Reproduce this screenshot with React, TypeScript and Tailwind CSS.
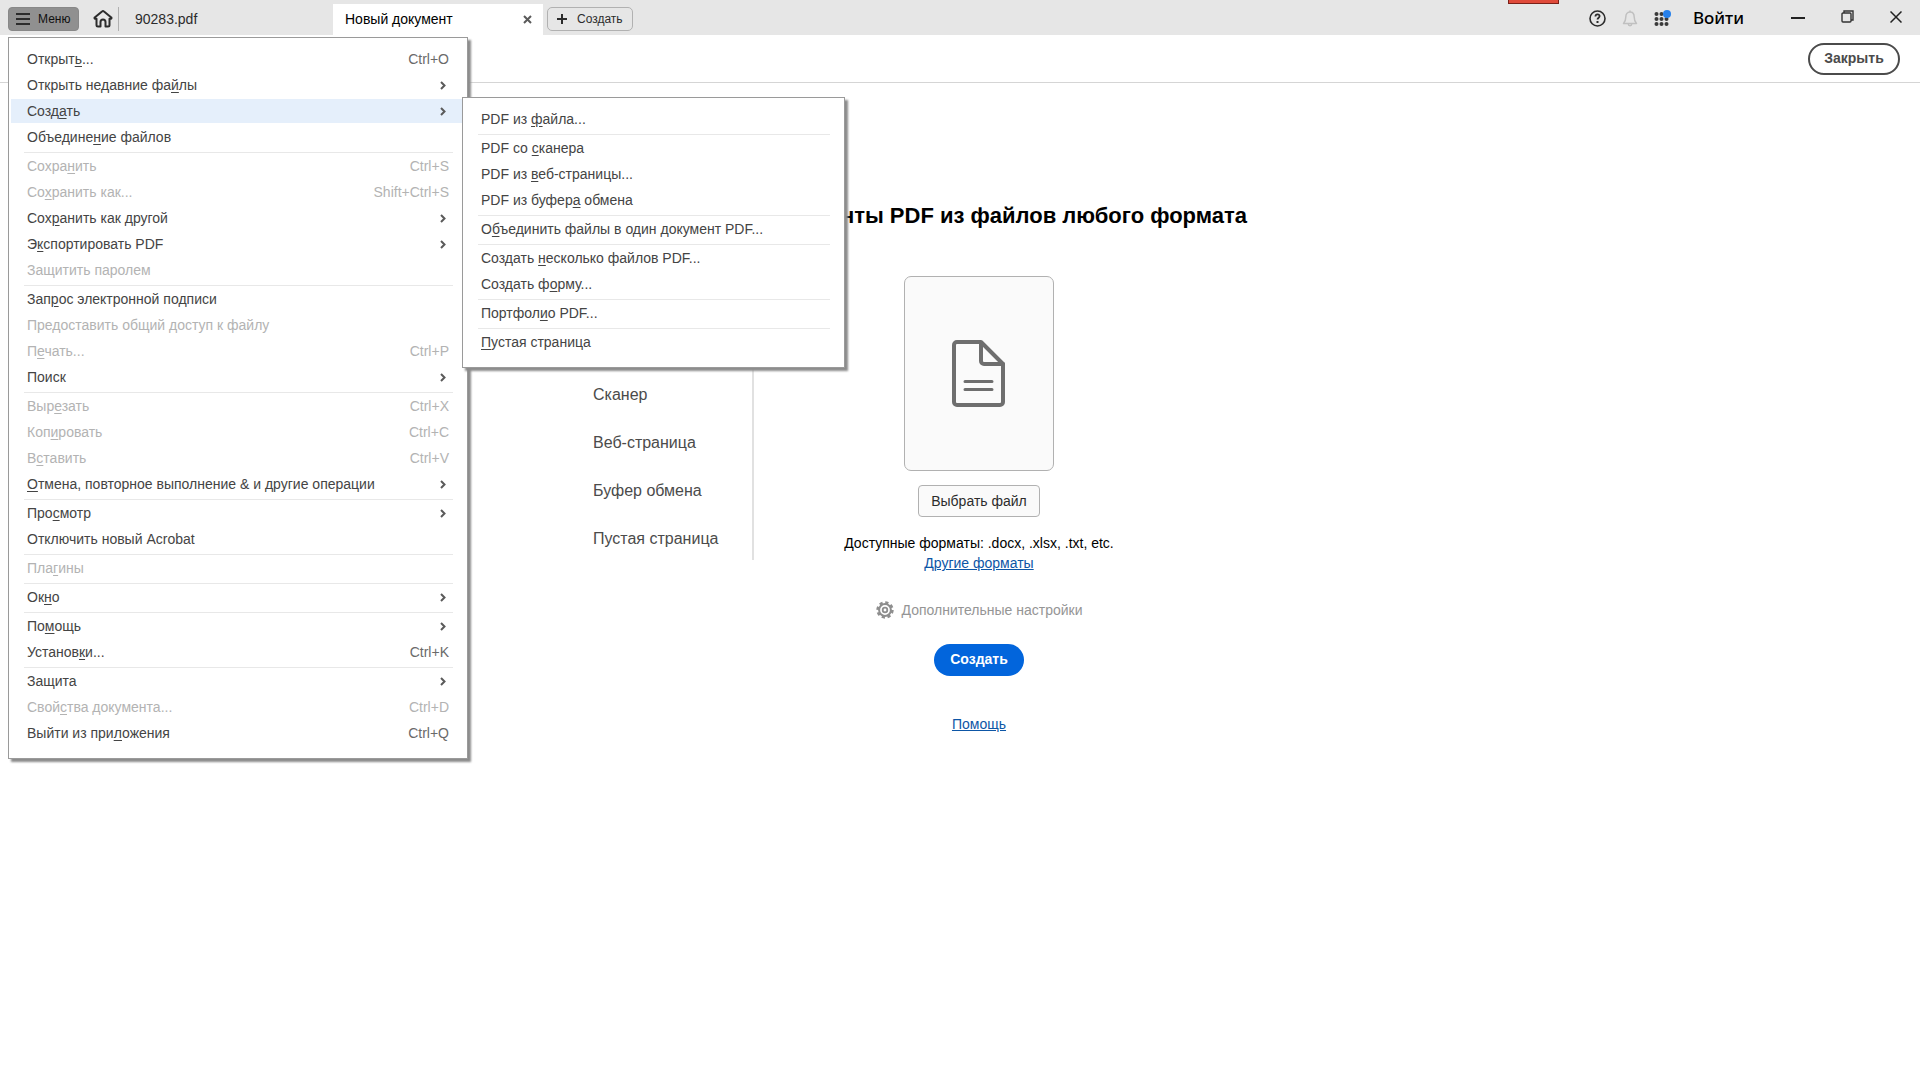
import { Fragment } from 'react'
import type { ReactNode } from 'react'

interface MenuEntry {
    label: string
    shortcut?: string
    submenu?: boolean
    disabled?: boolean
    active?: boolean
}

// "_" goes before the letter that serves as the access key
const mainMenu: MenuEntry[][] = [
    [
        { label: 'Открыт_ь...', shortcut: 'Ctrl+O' },
        { label: 'Открыть недавние фа_йлы', submenu: true },
        { label: 'Созд_ать', submenu: true, active: true },
        { label: 'Объедине_ние файлов' },
    ],
    [
        { label: 'Сохра_нить', shortcut: 'Ctrl+S', disabled: true },
        { label: 'Со_хранить как...', shortcut: 'Shift+Ctrl+S', disabled: true },
        { label: 'Сох_ранить как другой', submenu: true },
        { label: 'Э_кспортировать PDF', submenu: true },
        { label: 'Защитить паролем', disabled: true },
    ],
    [
        { label: 'Зап_рос электронной подписи' },
        { label: 'Предоставить общий доступ к файлу', disabled: true },
        { label: 'П_ечать...', shortcut: 'Ctrl+P', disabled: true },
        { label: 'Поиск', submenu: true },
    ],
    [
        { label: 'Выр_езать', shortcut: 'Ctrl+X', disabled: true },
        { label: 'Коп_ировать', shortcut: 'Ctrl+C', disabled: true },
        { label: 'В_ставить', shortcut: 'Ctrl+V', disabled: true },
        { label: '_Отмена, повторное выполнение & и другие операции', submenu: true },
    ],
    [
        { label: 'Про_смотр', submenu: true },
        { label: 'Отключить новый Acrobat' },
    ],
    [{ label: 'Пла_гины', disabled: true }],
    [{ label: 'Ок_но', submenu: true }],
    [
        { label: 'По_мощь', submenu: true },
        { label: 'Установ_ки...', shortcut: 'Ctrl+K' },
    ],
    [
        { label: 'Защита', submenu: true },
        { label: 'Свой_ства документа...', shortcut: 'Ctrl+D', disabled: true },
        { label: 'Выйти из при_ложения', shortcut: 'Ctrl+Q' },
    ],
]

const createMenu: MenuEntry[][] = [
    [{ label: 'PDF из _файла...' }],
    [
        { label: 'PDF со _сканера' },
        { label: 'PDF из _веб-страницы...' },
        { label: 'PDF из буфер_а обмена' },
    ],
    [{ label: 'О_бъединить файлы в один документ PDF...' }],
    [{ label: 'Создать _несколько файлов PDF...' }, { label: 'Создать ф_орму...' }],
    [{ label: 'Портфол_ио PDF...' }],
    [{ label: '_Пустая страница' }],
]

const sources = ['Сканер', 'Веб-страница', 'Буфер обмена', 'Пустая страница']

const AccessLabel = ({ text }: { text: string }) => {
    const at = text.indexOf('_')
    if (at < 0) return <span>{text}</span>
    return (
        <span>
            {text.slice(0, at)}
            <span className="underline underline-offset-2">{text[at + 1]}</span>
            {text.slice(at + 2)}
        </span>
    )
}

const MenuItem = ({ item }: { item: MenuEntry }) => (
    <li className="h-[26px] py-px">
        <button
            disabled={item.disabled}
            className={`flex h-6 w-full items-center justify-between pr-[14px] pl-4 text-left disabled:text-[#b3b3b3] ${
                item.active ? 'bg-[#e5effb]' : ''
            }`}
        >
            <AccessLabel text={item.label} />
            {item.shortcut && (
                <span className={item.disabled ? '' : 'text-[#6a6a6a]'}>{item.shortcut}</span>
            )}
            {item.submenu && (
                <svg className="mr-[3px] h-[9px] w-[6px]" viewBox="0 0 6 9" fill="none" stroke="#5a5a5a" strokeWidth="2">
                    <path d="M1 1l3.5 3.5L1 8" />
                </svg>
            )}
        </button>
    </li>
)

const MenuPanel = ({ groups, className }: { groups: MenuEntry[][]; className: string }) => (
    <ul
        className={`absolute border border-[#9a9a9a] bg-white pt-2 pr-1 pb-3 pl-[2px] text-[14px] leading-[18px] text-[#444] shadow-[3px_3px_2px_#8c8c8c] ${className}`}
    >
        {groups.map((group, i) => (
            <Fragment key={i}>
                {i > 0 && <li className="mr-[10px] ml-[13px] h-[3px] border-b border-[#e8e8e8]" />}
                {group.map((item) => (
                    <MenuItem key={item.label} item={item} />
                ))}
            </Fragment>
        ))}
    </ul>
)

const IconButton = ({ label, className = '', children }: { label: string; className?: string; children: ReactNode }) => (
    <button aria-label={label} className={`flex shrink-0 items-center justify-center ${className}`}>
        {children}
    </button>
)

const TitleBar = () => (
    <header className="relative flex h-[35px] items-center bg-[#e6e6e6] text-[#2c2c2c]">
        <div className="absolute top-0 right-[361px] h-1 w-[51px] border border-t-0 border-[#7a2018] bg-[#e04a3a]" />
        <button className="mt-[3px] ml-2 flex h-6 w-[71px] items-center gap-2 rounded-[4px] border border-[#888] bg-[#909090] pl-[7px] text-[12px] text-[#111]">
            <svg className="h-3 w-[14px]" viewBox="0 0 14 12" stroke="#2c2c2c" strokeWidth="2">
                <path d="M0 1h14M0 6h14M0 11h14" />
            </svg>
            Меню
        </button>
        <IconButton label="Главная" className="mt-[2px] ml-[14px] w-5">
            <svg className="h-[18px] w-5" viewBox="0 0 20 18" fill="none" stroke="#2c2c2c" strokeWidth="2" strokeLinejoin="round" strokeLinecap="round">
                <path d="M3.500 8.800H2.200a.8.8 0 0 1-.5-1.300L9 1.500a1.500 1.500 0 0 1 2 0l7.300 6a.8.8 0 0 1-.5 1.300h-1.300V15a1.500 1.500 0 0 1-1.500 1.500h-2.500V12a2 2 0 0 0-5 0v4.500H5A1.500 1.500 0 0 1 3.500 15z" />
            </svg>
        </IconButton>
        <div className="mt-[3px] ml-[5px] h-6 w-px bg-[#b0b0b0]" />
        <button className="mt-[3px] w-[214px] pl-4 text-left text-[14px]">90283.pdf</button>
        <div className="mt-1 flex h-[31px] w-[210px] items-center justify-between bg-white pr-[11px] pl-3 text-[14px] text-black">
            <button>Новый документ</button>
            <IconButton label="Закрыть вкладку">
                <svg className="h-[9px] w-[9px]" viewBox="0 0 9 9" stroke="#5a5a5a" strokeWidth="2">
                    <path d="M1 1l7 7M8 1L1 8" />
                </svg>
            </IconButton>
        </div>
        <button className="mt-[3px] ml-1 flex h-6 w-[86px] items-center gap-[10px] rounded-[5px] border border-[#b1b1b1] pl-[9px] text-[12px]">
            <svg className="h-[10px] w-[10px]" viewBox="0 0 10 10" stroke="#2c2c2c" strokeWidth="2">
                <path d="M5 0v10M0 5h10" />
            </svg>
            Создать
        </button>

        <div className="ml-auto flex items-center pt-[2px]">
            <IconButton label="Справка">
                <svg className="h-[17px] w-[17px]" viewBox="0 0 17 17" fill="none" stroke="#2c2c2c" strokeWidth="1.600">
                    <circle cx="8.500" cy="8.500" r="7.500" />
                    <path d="M6.400 6.500c.2-3 4.400-2.600 4.200-.2-.1 1.400-2.100 1.500-2.100 3.300" strokeWidth="1.800" />
                    <path d="M8.500 11v2" strokeWidth="2" />
                </svg>
            </IconButton>
            <IconButton label="Уведомления" className="ml-4">
                <svg className="h-[17px] w-4" viewBox="0 0 16 17" fill="none" stroke="#c0c0c0" strokeWidth="1.500" strokeLinejoin="round">
                    <path d="M1.500 13.500h13c-2-2-2.300-3.500-2.300-6.500 0-3-1.500-5-4.200-5S3.800 4 3.800 7c0 3-.3 4.500-2.300 6.500zM6.300 14a1.700 1.700 0 0 0 3.400 0M8 .5V2" />
                </svg>
            </IconButton>
            <IconButton label="Приложения" className="ml-4">
                <svg className="h-[17px] w-[17px]" viewBox="0 0 17 17" fill="#3a3a3a">
                    <circle cx="2.500" cy="4" r="2" />
                    <circle cx="7.500" cy="4" r="2" />
                    <circle cx="2.500" cy="9" r="2" />
                    <circle cx="7.500" cy="9" r="2" />
                    <circle cx="12.500" cy="9" r="2" />
                    <circle cx="2.500" cy="14" r="2" />
                    <circle cx="7.500" cy="14" r="2" />
                    <circle cx="12.500" cy="14" r="2" />
                    <circle cx="13" cy="4" r="4" fill="#2680eb" />
                </svg>
            </IconButton>
            <button className="ml-[22px] pb-px font-['Noto_Sans','Open_Sans',sans-serif] text-[17px] leading-6 font-medium text-black">Войти</button>
        </div>
        <div className="ml-[47px] flex items-center pr-[18px] pb-[2px]">
            <IconButton label="Свернуть">
                <svg className="h-[14px] w-[14px]" viewBox="0 0 14 14" stroke="#222" strokeWidth="2">
                    <path d="M0 8h14" />
                </svg>
            </IconButton>
            <IconButton label="Восстановить" className="ml-9">
                <svg className="h-[13px] w-[13px]" viewBox="0 0 13 13" fill="none" stroke="#333" strokeWidth="1.400">
                    <rect x="1" y="3" width="9" height="9" rx="1" />
                    <path d="M3 3V1h9v9h-2" />
                </svg>
            </IconButton>
            <IconButton label="Закрыть окно" className="ml-9">
                <svg className="h-3 w-3" viewBox="0 0 12 12" stroke="#222" strokeWidth="1.500">
                    <path d="M.5.500l11 11M11.500.500l-11 11" />
                </svg>
            </IconButton>
        </div>
    </header>
)

const App = () => (
    <div className="relative min-h-screen overflow-hidden bg-white font-['Liberation_Sans',Arial,sans-serif]">
        <TitleBar />
        <div className="flex h-12 items-center justify-end border-b border-[#d5d5d5] pr-5">
            <button className="h-8 w-[92px] rounded-full border-2 border-[#4b4b4b] text-[14px] font-bold text-[#4b4b4b]">
                Закрыть
            </button>
        </div>

        <main className="pt-[119px]">
            <h1 className="pr-[673px] text-right text-[22px] leading-7 font-bold text-black">
                Документы PDF из файлов любого формата
            </h1>
            <div className="mt-11 flex">
                <nav className="flex h-[286px] w-[754px] flex-col justify-end gap-6 border-r-2 border-[#e1e1e1] pb-[9px] pl-[593px] text-[16px] leading-6 text-[#4b4b4b]">
                    {sources.map((source) => (
                        <button key={source} className="text-left whitespace-nowrap">
                            {source}
                        </button>
                    ))}
                </nav>
                <section className="ml-[50px] flex w-[350px] flex-col items-center text-[14px]">
                    <div className="mt-0.5 flex h-[195px] w-[150px] items-center justify-center rounded-[7px] border border-[#b1b1b1] bg-[#fafafa]">
                        <svg className="h-[67px] w-[54px]" viewBox="0 0 54 67" fill="none" stroke="#6e6e6e" strokeWidth="4" strokeLinejoin="round" strokeLinecap="round">
                            <path d="M29 2H5a3 3 0 0 0-3 3v57a3 3 0 0 0 3 3h43a3 3 0 0 0 3-3V24z" />
                            <path d="M29 3v18a3 3 0 0 0 3 3h19" />
                            <path d="M13 41.500h27M13 49.500h27" strokeWidth="3" />
                        </svg>
                    </div>
                    <button className="mt-[14px] h-8 w-[122px] rounded-[4px] border border-[#b1b1b1] bg-[#fafafa] text-[#2c2c2c]">
                        Выбрать файл
                    </button>
                    <p className="mt-4 leading-5 text-black">Доступные форматы: .docx, .xlsx, .txt, etc.</p>
                    <a href="#formats" className="leading-5 text-[#0d56a6] underline">
                        Другие форматы
                    </a>
                    <button className="mt-[27px] flex items-center gap-2 leading-5 text-[#959595]">
                        <svg className="h-[18px] w-[18px]" viewBox="0 0 18 18" fill="none" stroke="#8e8e8e">
                            <circle cx="9" cy="9" r="5.900" strokeWidth="2" />
                            <circle cx="9" cy="9" r="2.300" strokeWidth="1.800" />
                            <circle cx="9" cy="9" r="7.400" strokeWidth="2.600" strokeDasharray="3.200 2.612" />
                        </svg>
                        Дополнительные настройки
                    </button>
                    <button className="mt-6 h-8 w-[90px] rounded-full bg-[#0265dc] pb-px font-bold text-white">Создать</button>
                    <a href="#help" className="mt-[38px] leading-5 text-[#0d56a6] underline">
                        Помощь
                    </a>
                </section>
            </div>
        </main>

        <MenuPanel groups={mainMenu} className="top-[37px] left-2 w-[460px]" />
        <MenuPanel groups={createMenu} className="top-[97px] left-[462px] w-[383px]" />
    </div>
)

export default App
